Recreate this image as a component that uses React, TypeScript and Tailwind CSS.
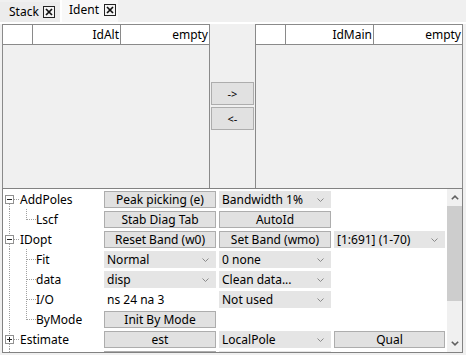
import React from "react";

const DOT = "#a0a0a0";

function Chevron() {
  return (
    <svg width="7" height="4" viewBox="0 0 7 4" className="shrink-0">
      <path d="M0.5 0.5 L3.5 3.5 L6.5 0.5" fill="none" stroke="#8a8a8a" strokeWidth="1" />
    </svg>
  );
}

function Btn({ children }: { children?: React.ReactNode }) {
  return (
    <div className="h-[17px] border border-[#adadad] bg-[#e1e1e1] flex items-center justify-center leading-none">
      {children}
    </div>
  );
}

function Drop({ children }: { children?: React.ReactNode }) {
  return (
    <div className="h-[17px] bg-[#e5e5e5] flex items-center justify-between pl-[3px] pr-[7px] leading-none">
      <span>{children}</span>
      <Chevron />
    </div>
  );
}

function Plain({ children }: { children: React.ReactNode }) {
  return <div className="h-[17px] flex items-center pl-[3px] leading-none">{children}</div>;
}

type Kind = "rootFirst" | "root" | "rootPlus" | "child" | "childLast" | "cont";

function Tree({ kind }: { kind: Kind }) {
  const isRoot = kind === "rootFirst" || kind === "root" || kind === "rootPlus";
  const w = isRoot ? 17 : 33;
  return (
    <svg width={w} height="20" viewBox={`0 0 ${w} 20`} className="shrink-0" shapeRendering="crispEdges">
      {isRoot ? (
        <>
          {kind !== "rootFirst" && <line x1="6.5" y1="0" x2="6.5" y2="6" stroke={DOT} strokeDasharray="1 1" />}
          <line x1="6.5" y1="15" x2="6.5" y2="20" stroke={DOT} strokeDasharray="1 1" />
          <line x1="11" y1="10.5" x2="17" y2="10.5" stroke={DOT} strokeDasharray="1 1" />
          <rect x="2.5" y="6.5" width="8" height="8" fill="white" stroke="#919191" />
          <path d="M4 10.5 H9" stroke="#222" />
          {kind === "rootPlus" && <path d="M6.5 8 V13" stroke="#222" />}
        </>
      ) : (
        <>
          <line x1="6.5" y1="0" x2="6.5" y2="20" stroke={DOT} strokeDasharray="1 1" />
          {kind !== "cont" && (
            <>
              <line x1="23.5" y1="0" x2="23.5" y2={kind === "childLast" ? 11 : 20} stroke={DOT} strokeDasharray="1 1" />
              <line x1="24" y1="10.5" x2="33" y2="10.5" stroke={DOT} strokeDasharray="1 1" />
            </>
          )}
        </>
      )}
    </svg>
  );
}

function Row({
  kind,
  label,
  c2,
  c3,
  c4,
}: {
  kind: Kind;
  label?: string;
  c2?: React.ReactNode;
  c3?: React.ReactNode;
  c4?: React.ReactNode;
}) {
  return (
    <div className="flex h-5 shrink-0">
      <div className="w-[101px] h-5 flex items-center">
        <Tree kind={kind} />
        <span className="leading-none pt-[1px]">{label}</span>
      </div>
      <div className="w-[112px] pt-[2px]">{c2}</div>
      <div className="w-[112px] ml-[3px] pt-[2px]">{c3}</div>
      <div className="w-[111px] ml-[3px] pt-[2px]">{c4}</div>
    </div>
  );
}

function CloseBox() {
  return (
    <svg width="12" height="12" viewBox="0 0 12 12" className="shrink-0" shapeRendering="crispEdges">
      <rect x="0.5" y="0.5" width="11" height="11" fill="#f4f4f4" stroke="#222" />
      <path d="M3 3 L9 9 M9 3 L3 9" stroke="#111" strokeWidth="1.7" shapeRendering="geometricPrecision" />
    </svg>
  );
}

function Table({ col2 }: { col2: string }) {
  return (
    <div className="w-[208px] h-[164px] border-l border-t border-r border-[#8a8a8a] bg-[#f0f0f0]">
      <div className="flex h-[20px] bg-white border-b border-[#8a8a8a]">
        <div className="w-[30px] border-r border-[#8a8a8a]" />
        <div className="w-[88px] border-r border-[#8a8a8a] flex items-center justify-end pr-[1px] leading-none">{col2}</div>
        <div className="flex-1 flex items-center justify-end pr-[1px] leading-none">empty</div>
      </div>
    </div>
  );
}

function ScrollArrow({ up }: { up: boolean }) {
  return (
    <svg width="8" height="5" viewBox="0 0 8 5">
      <path d={up ? "M0.8 4.3 L4 1.2 L7.2 4.3" : "M0.8 0.7 L4 3.8 L7.2 0.7"} fill="none" stroke="#606060" strokeWidth="1.6" />
    </svg>
  );
}

export default function App() {
  return (
    <div className="w-[466px] h-[355px] bg-[#f0f0f0] text-[12px] text-black font-['Noto_Sans',sans-serif] overflow-hidden">
      {/* tab strip */}
      <div className="flex h-[22px]">
        <div className="w-[60px] h-[20px] mt-[2px] bg-[#ececec] flex items-center pl-[9px]">
          <span className="leading-none">Stack</span>
          <span className="ml-[4px]">
            <CloseBox />
          </span>
        </div>
        <div className="w-[2px] bg-white" />
        <div className="w-[56px] h-[22px] bg-[#f8f8f8] flex items-start pt-[4px] pl-[7px]">
          <span className="leading-none">Ident</span>
          <span className="ml-[5px]">
            <CloseBox />
          </span>
        </div>
      </div>
      <div className="h-[2px] bg-white" />

      {/* upper panels */}
      <div className="flex h-[164px] pl-[2px]">
        <Table col2="IdAlt" />
        <div className="w-[45px] flex flex-col pt-[58px] pl-[1px] gap-[2px]">
          <div className="w-[43px] h-[23px] border border-[#adadad] bg-[#e1e1e1] flex items-center justify-center leading-none text-[11px]">
            -&gt;
          </div>
          <div className="w-[43px] h-[23px] border border-[#adadad] bg-[#e1e1e1] flex items-center justify-center leading-none text-[11px]">
            &lt;-
          </div>
        </div>
        <Table col2="IdMain" />
      </div>

      {/* property grid */}
      <div className="ml-[2px] w-[461px] h-[165px] border border-[#828282] bg-white flex overflow-hidden">
        <div className="flex flex-col w-[442px] overflow-hidden">
          <Row kind="rootFirst" label="AddPoles" c2={<Btn>Peak picking (e)</Btn>} c3={<Drop>Bandwidth 1%</Drop>} />
          <Row kind="childLast" label="Lscf" c2={<Btn>Stab Diag Tab</Btn>} c3={<Btn>AutoId</Btn>} />
          <Row
            kind="root"
            label="IDopt"
            c2={<Btn>Reset Band (w0)</Btn>}
            c3={<Btn>Set Band (wmo)</Btn>}
            c4={<Drop>[1:691] (1-70)</Drop>}
          />
          <Row kind="child" label="Fit" c2={<Drop>Normal</Drop>} c3={<Drop>0 none</Drop>} />
          <Row kind="child" label="data" c2={<Drop>disp</Drop>} c3={<Drop>Clean data...</Drop>} />
          <Row kind="child" label="I/O" c2={<Plain>ns 24 na 3</Plain>} c3={<Drop>Not used</Drop>} />
          <Row kind="childLast" label="ByMode" c2={<Btn>Init By Mode</Btn>} />
          <Row kind="rootPlus" label="Estimate" c2={<Btn>est</Btn>} c3={<Drop>LocalPole</Drop>} c4={<Btn>Qual</Btn>} />
          <Row kind="cont" c2={<Btn />} c3={<Drop />} />
        </div>
        <div className="ml-[2px] w-[15px] flex flex-col bg-[#f0f0f0]">
          <div className="h-[17px] flex items-center justify-center">
            <ScrollArrow up />
          </div>
          <div className="h-[95px] bg-[#cdcdcd]" />
          <div className="flex-1" />
          <div className="h-[17px] flex items-center justify-center">
            <ScrollArrow up={false} />
          </div>
        </div>
      </div>
    </div>
  );
}
